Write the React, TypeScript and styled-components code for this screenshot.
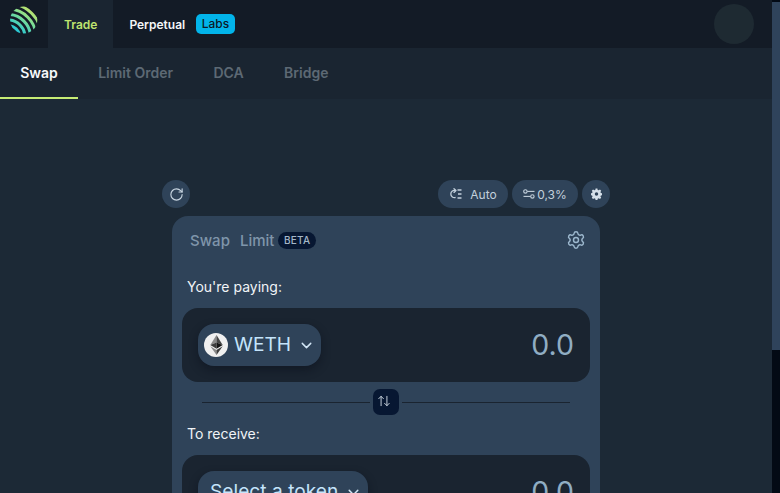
import React from "react";
import styled, { createGlobalStyle } from "styled-components";
import { ChevronDown, RotateCw, Settings, ArrowUpDown } from "lucide-react";

const Global = createGlobalStyle`
  html, body { margin: 0; padding: 0; height: 100%; background: #1c2936; overflow: hidden; }
  #root { height: 100%; }
  * { box-sizing: border-box; }
`;

const Page = styled.div`
  display: flex;
  height: 100vh;
  background: #1c2936;
  font-family: Inter, "Liberation Sans", sans-serif;
`;
const Viewport = styled.div`
  flex: 1;
  min-width: 0;
  overflow: hidden;
`;
const ScrollTrack = styled.div`
  width: 8px;
  background: #030a15;
`;
const ScrollThumb = styled.div`
  height: 348px;
  margin-top: 2px;
  background: #2f435b;
`;

const TopBar = styled.header`
  display: flex;
  height: 48px;
  background: #131b26;
`;
const LogoCell = styled.div`
  width: 48px;
  padding-bottom: 8px;
  display: flex;
  align-items: center;
  justify-content: center;
`;
const TopTab = styled.div<{ $active?: boolean }>`
  display: flex;
  align-items: center;
  gap: 11px;
  padding: 0 16px;
  font-size: 12px;
  font-weight: 600;
  color: ${(p) => (p.$active ? "#bfe46f" : "#f4f6f8")};
  background: ${(p) => (p.$active ? "#1a2531" : "transparent")};
`;
const LabsBadge = styled.span`
  background: #02b4ea;
  color: #0c1826;
  border-radius: 5px;
  font-size: 12px;
  font-weight: 500;
  line-height: 20px;
  padding: 0 5.5px;
`;
const Avatar = styled.div`
  width: 40px;
  height: 40px;
  border-radius: 50%;
  background: #1e2a32;
  margin: 4px 18px 0 auto;
`;

const SubNav = styled.nav`
  display: flex;
  height: 51px;
  background: #1a2531;
`;
const SubTab = styled.div<{ $active?: boolean }>`
  display: flex;
  align-items: center;
  justify-content: center;
  padding: 0 20.2px;
  min-width: ${(p) => (p.$active ? "78px" : "0")};
  font-size: 14px;
  font-weight: 600;
  color: ${(p) => (p.$active ? "#f7f9fb" : "#5d6974")};
  border-bottom: 2px solid ${(p) => (p.$active ? "#c6ec74" : "transparent")};
`;

const Main = styled.main`
  display: flex;
  justify-content: center;
  padding: 81px 0 18px;
`;
const Column = styled.div`
  width: 448px;
`;
const ToolRow = styled.div`
  display: flex;
  align-items: center;
  gap: 4px;
  height: 28px;
  margin-bottom: 8px;
`;
const RoundButton = styled.div`
  width: 28px;
  height: 28px;
  border-radius: 50%;
  background: #2f4359;
  color: #c9d6e2;
  display: flex;
  align-items: center;
  justify-content: center;
`;
const Spacer = styled.div`
  flex: 1;
`;
const Pill = styled.div<{ $w: number; $gap: number }>`
  width: ${(p) => p.$w}px;
  height: 28px;
  border-radius: 14px;
  background: #2f4359;
  color: #c3d0dc;
  font-size: 12px;
  display: flex;
  align-items: center;
  justify-content: center;
  gap: ${(p) => p.$gap}px;
`;

const Card = styled.section`
  margin: 0 10px;
  background: #2f4359;
  border-radius: 16px;
  padding: 10px 10px 14px;
`;
const CardHead = styled.div`
  display: flex;
  align-items: center;
  height: 28px;
  padding: 0 4px 0 8px;
  margin-bottom: 23px;
`;
const HeadTab = styled.span`
  font-size: 15px;
  font-weight: 500;
  color: #7f95aa;
  margin-right: 10px;
`;
const BetaBadge = styled.span`
  margin-left: -6px;
  background: #071732;
  color: #a5b7c9;
  border-radius: 9px;
  font-size: 10px;
  font-weight: 500;
  letter-spacing: 0.3px;
  line-height: 17px;
  padding: 0 5.5px;
`;
const GearWrap = styled.div`
  margin-left: auto;
  display: flex;
  color: #9db8ce;
`;
const FieldLabel = styled.div`
  font-size: 14px;
  line-height: 20px;
  color: #f1f4f7;
  padding-left: 5px;
  margin-bottom: 11px;
`;
const Field = styled.div`
  height: 74px;
  background: #1a2430;
  border-radius: 16px;
  padding: 0 16px;
  display: flex;
  align-items: center;
  justify-content: space-between;
`;
const TokenButton = styled.div<{ $pad: number }>`
  height: 42px;
  border-radius: 16px;
  background: #2f4359;
  box-shadow: 0 4px 10px rgba(8, 14, 24, 0.45);
  display: flex;
  align-items: center;
  padding: 0 6px 0 ${(p) => p.$pad}px;
  color: #c4e4fb;
  font-size: 19.2px;
  gap: 6px;
  svg.chev { margin-left: 1px; color: #d2e6f6; }
`;
const TokenLabel = styled.span`
  margin-bottom: 2px;
`;
const TokenIcon = styled.div`
  width: 24px;
  height: 24px;
  border-radius: 50%;
  background: #f0f0f0;
  display: flex;
  align-items: center;
  justify-content: center;
`;
const Amount = styled.div`
  font-size: 28.5px;
  color: #90adc3;
  margin-bottom: 2px;
`;
const DividerRow = styled.div`
  height: 26px;
  margin: 7px 20px 9px;
  display: flex;
  align-items: center;
  gap: 3px;
`;
const Line = styled.div`
  flex: 1;
  height: 1px;
  background: #1a2430;
`;
const SwapToggle = styled.div`
  width: 26px;
  height: 26px;
  border-radius: 7px;
  background: #071732;
  color: #cfd9e3;
  padding: 0 5px 3px 0;
  display: flex;
  align-items: center;
  justify-content: center;
`;
const CtaButton = styled.div`
  margin-top: 16px;
  height: 48px;
  border-radius: 14px;
  background: #c6ec74;
  color: #1a2430;
  font-size: 16px;
  font-weight: 600;
  display: flex;
  align-items: center;
  justify-content: center;
`;

const Logo = () => (
  <svg width="28" height="28" viewBox="0 0 28 28">
    <defs>
      <linearGradient id="lg" gradientUnits="userSpaceOnUse" x1="24" y1="2" x2="6" y2="27">
        <stop offset="0" stopColor="#d2e660" />
        <stop offset="0.5" stopColor="#74db9a" />
        <stop offset="1" stopColor="#1cc4de" />
      </linearGradient>
      <clipPath id="lc">
        <circle cx="13.7" cy="14" r="13.6" />
      </clipPath>
    </defs>
    <g clipPath="url(#lc)" fill="none" stroke="url(#lg)" strokeWidth="3">
      <circle cx="-2" cy="31" r="11.5" />
      <circle cx="-2" cy="31" r="17" />
      <circle cx="-2" cy="31" r="22.5" />
      <circle cx="-2" cy="31" r="28" />
      <circle cx="-2" cy="31" r="33.5" />
    </g>
  </svg>
);

const EthIcon = () => (
  <svg width="13" height="20" viewBox="0 0 13 20">
    <path d="M6.5 0 L6.5 7.4 L0.3 10.1 Z" fill="#8a8a8a" />
    <path d="M6.5 0 L12.7 10.1 L6.5 7.4 Z" fill="#454545" />
    <path d="M6.5 7.4 L0.3 10.1 L6.5 13.7 Z" fill="#3c3c3c" />
    <path d="M6.5 7.4 L12.7 10.1 L6.5 13.7 Z" fill="#141414" />
    <path d="M0.3 11.3 L6.5 20 L6.5 14.9 Z" fill="#8a8a8a" />
    <path d="M12.7 11.3 L6.5 20 L6.5 14.9 Z" fill="#3c3c3c" />
  </svg>
);

const AutoIcon = () => (
  <svg width="13" height="12" viewBox="0 0 13 12" fill="none" stroke="#c3d0dc" strokeWidth="1.3">
    <path d="M6.6 2.6 A3.6 3.6 0 1 0 6.6 9.4" />
    <path d="M5 4.4 L7 2.6 L5 0.8" strokeLinecap="round" strokeLinejoin="round" />
    <path d="M8.5 2 H12.5 M9 6 H12.5 M8.5 10 H12.5" />
  </svg>
);

const SlidersIcon = () => (
  <svg width="12" height="12" viewBox="0 0 12 12" fill="none" stroke="#c3d0dc" strokeWidth="1.1">
    <circle cx="2.4" cy="3.4" r="1.7" />
    <path d="M4.2 3.4 H11.5" />
    <circle cx="9.4" cy="8.4" r="1.7" />
    <path d="M0.5 8.4 H7.6" />
  </svg>
);

const SolidGear = () => (
  <svg width="11" height="12" viewBox="0 0 24 24" fill="#d5dfe9">
    <path fillRule="evenodd" d="M10 0h4l.6 3 2.3 1 2.6-1.7 2.8 2.8-1.7 2.6 1 2.3 3 .6v4l-3 .6-1 2.3 1.7 2.6-2.8 2.8-2.6-1.7-2.3 1-.6 3h-4l-.6-3-2.3-1-2.6 1.7-2.8-2.8 1.7-2.6-1-2.3-3-.6v-4l3-.6 1-2.3-1.7-2.6 2.8-2.8 2.6 1.7 2.3-1zM12 8.2a3.8 3.8 0 1 0 0 7.6 3.8 3.8 0 0 0 0-7.6z" />
  </svg>
);

export default function App() {
  return (
    <Page>
      <Global />
      <Viewport>
        <TopBar>
          <LogoCell>
            <Logo />
          </LogoCell>
          <TopTab $active>Trade</TopTab>
          <TopTab>
            Perpetual
            <LabsBadge>Labs</LabsBadge>
          </TopTab>
          <Avatar />
        </TopBar>
        <SubNav>
          <SubTab $active>Swap</SubTab>
          <SubTab>Limit Order</SubTab>
          <SubTab>DCA</SubTab>
          <SubTab>Bridge</SubTab>
        </SubNav>
        <Main>
          <Column>
            <ToolRow>
              <RoundButton>
                <RotateCw size={15} strokeWidth={1.8} />
              </RoundButton>
              <Spacer />
              <Pill $w={70} $gap={8}>
                <AutoIcon />
                Auto
              </Pill>
              <Pill $w={66} $gap={2}>
                <SlidersIcon />
                0,3%
              </Pill>
              <RoundButton>
                <SolidGear />
              </RoundButton>
            </ToolRow>
            <Card>
              <CardHead>
                <HeadTab>Swap</HeadTab>
                <HeadTab>Limit</HeadTab>
                <BetaBadge>BETA</BetaBadge>
                <GearWrap>
                  <Settings size={20} strokeWidth={1.7} />
                </GearWrap>
              </CardHead>
              <FieldLabel>You're paying:</FieldLabel>
              <Field>
                <TokenButton $pad={6}>
                  <TokenIcon>
                    <EthIcon />
                  </TokenIcon>
                  <TokenLabel>WETH</TokenLabel>
                  <ChevronDown className="chev" size={17} />
                </TokenButton>
                <Amount>0.0</Amount>
              </Field>
              <DividerRow>
                <Line />
                <SwapToggle>
                  <ArrowUpDown size={14} strokeWidth={1.6} />
                </SwapToggle>
                <Line />
              </DividerRow>
              <FieldLabel>To receive:</FieldLabel>
              <Field>
                <TokenButton $pad={12}>
                  <TokenLabel>Select a token</TokenLabel>
                  <ChevronDown className="chev" size={17} />
                </TokenButton>
                <Amount>0.0</Amount>
              </Field>
              <CtaButton>Connect Wallet</CtaButton>
            </Card>
          </Column>
        </Main>
      </Viewport>
      <ScrollTrack>
        <ScrollThumb />
      </ScrollTrack>
    </Page>
  );
}
